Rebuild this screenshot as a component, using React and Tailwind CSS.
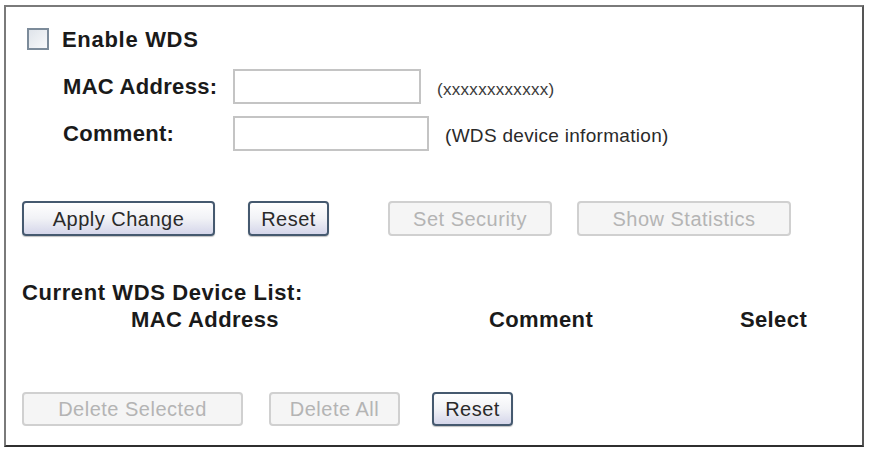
import React from 'react';

// Buttons share one look: the live ones get a slate border and a pale gradient,
// the greyed ones stay flat.
const Btn = ({ children, disabled, className = '' }) => (
  <button
    type="button"
    disabled={disabled}
    className={
      'rounded-[4px] text-[20px] tracking-[0.5px] leading-none ' +
      (disabled
        ? 'border-2 border-[#d0d0d0] bg-[#f5f5f5] text-[#b4b4b4] '
        : 'border-2 border-[#45596f] bg-gradient-to-b from-[#ffffff] via-[#f1f2f6] to-[#d5d6ea] text-[#2a2a2a] shadow-[0_1px_1px_rgba(0,0,0,0.25)] ') +
      className
    }
  >
    {children}
  </button>
);

const Field = ({ label, width, hint, hintClass }) => (
  <div className="flex items-center">
    <span className="w-[211px] pl-[41px] shrink-0 whitespace-nowrap text-[22px] font-bold tracking-[0.3px] text-[#1a1a1a]">{label}</span>
    <input
      type="text"
      className={`${width} h-[35px] border-2 border-[#c4c4c4] bg-white outline-none`}
    />
    <span className={hintClass}>{hint}</span>
  </div>
);

export default function App() {
  return (
    <div className="w-[870px] h-[451px] bg-white pt-[5px] pl-[4px] font-['Liberation_Sans',Arial,sans-serif]">
      <div className="w-[860px] h-[442px] border-2 border-t-[#7a7a7a] border-l-[#7a7a7a] border-r-[#555] border-b-[#2f2f2f] pl-[16px] pt-[20px] flex flex-col">
        <label className="flex items-center h-[24px]">
          <input
            type="checkbox"
            className="appearance-none ml-[5px] w-[22px] h-[22px] border-2 border-[#7c8b9a] bg-gradient-to-br from-[#dfe4ea] to-[#f8f9fb]"
          />
          <span className="ml-[13px] text-[22px] font-bold tracking-[0.7px] text-[#1a1a1a]">Enable WDS</span>
        </label>

        <div className="mt-[18px]">
          <Field
            label="MAC Address:"
            width="w-[188px]"
            hint="(xxxxxxxxxxxx)"
            hintClass="ml-[16px] mt-[6px] text-[17px] tracking-[0.3px] text-[#3a3a3a]"
          />
        </div>
        <div className="mt-[12px]">
          <Field
            label="Comment:"
            width="w-[196px]"
            hint="(WDS device information)"
            hintClass="ml-[16px] mt-[6px] text-[19px] tracking-[0.3px] text-[#2a2a2a]"
          />
        </div>

        <div className="mt-[50px] flex h-[35px]">
          <Btn className="w-[193px]">Apply Change</Btn>
          <Btn className="w-[81px] ml-[33px]">Reset</Btn>
          <Btn disabled className="w-[164px] ml-[59px]">Set Security</Btn>
          <Btn disabled className="w-[214px] ml-[25px]">Show Statistics</Btn>
        </div>

        <h2 className="mt-[44px] text-[22px] leading-[25px] font-bold tracking-[0.6px] text-[#1a1a1a]">
          Current WDS Device List:
        </h2>
        <div className="mt-[2px] grid grid-cols-[366px_306px_159px] text-[22px] leading-[25px] font-bold tracking-[0.4px] text-[#1a1a1a] text-center">
          <span>MAC Address</span>
          <span>Comment</span>
          <span>Select</span>
        </div>

        <div className="mt-[60px] flex h-[34px]">
          <Btn disabled className="w-[221px]">Delete Selected</Btn>
          <Btn disabled className="w-[131px] ml-[26px]">Delete All</Btn>
          <Btn className="w-[81px] ml-[32px]">Reset</Btn>
        </div>
      </div>
    </div>
  );
}
